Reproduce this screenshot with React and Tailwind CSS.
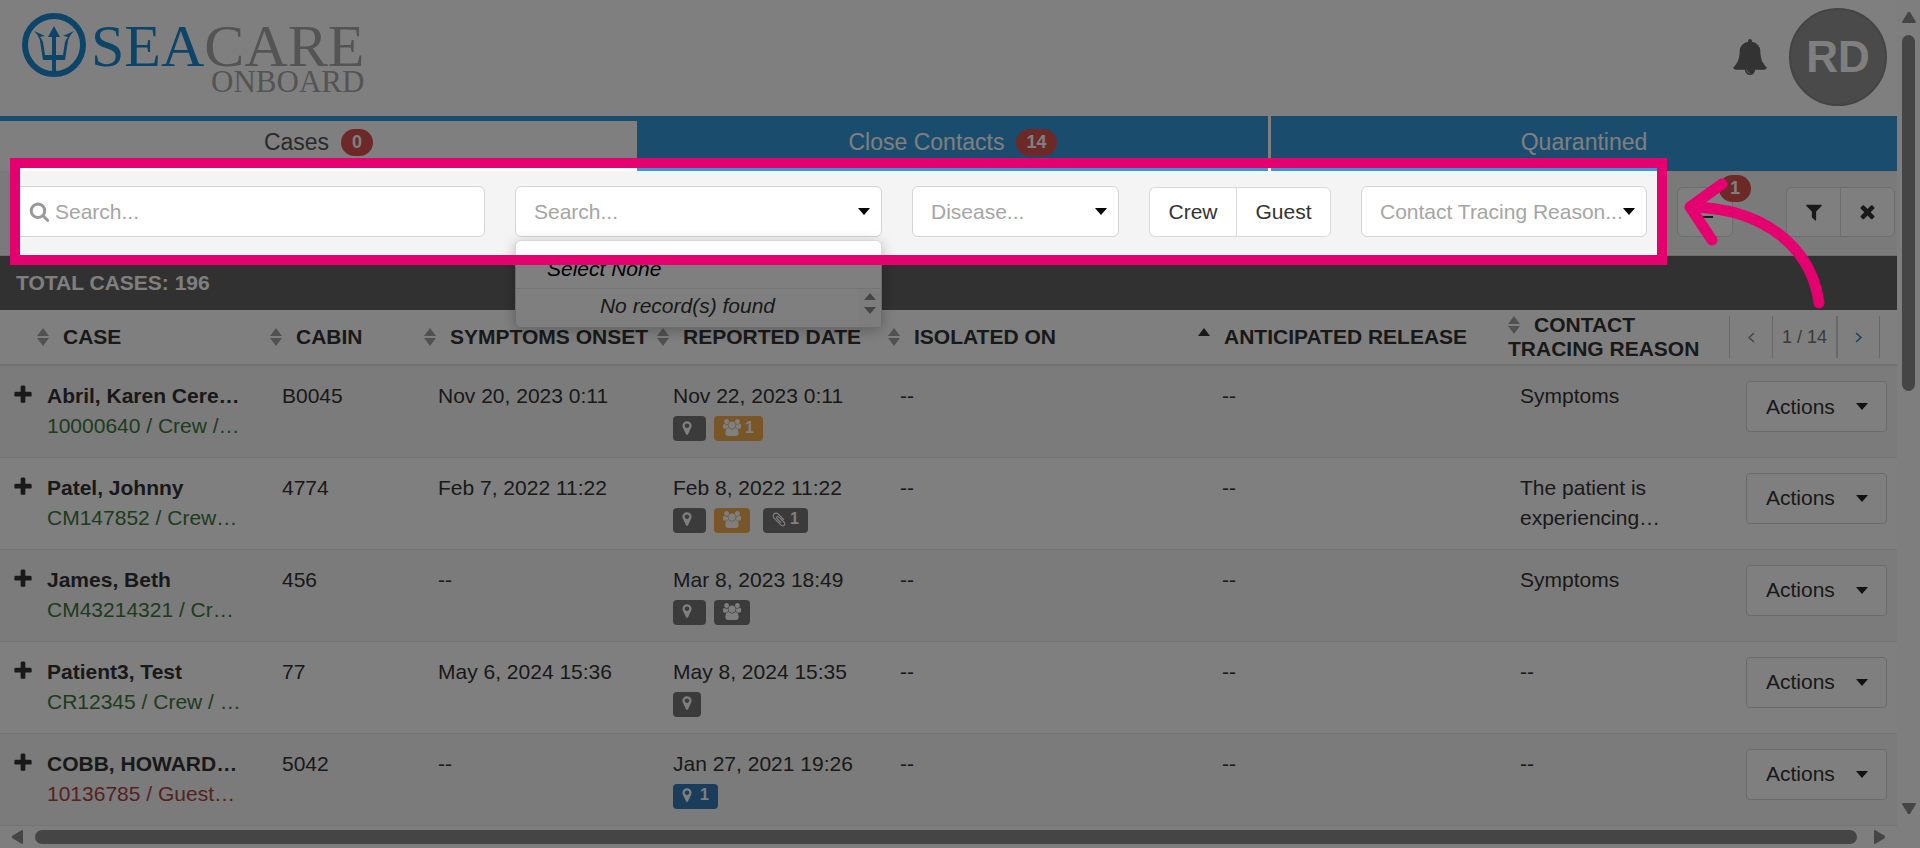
import React from 'react';

const ICONS = {
  search: 'M1216 832q0-185-131.5-316.5t-316.5-131.5-316.5 131.5-131.5 316.5 131.5 316.5 316.5 131.5 316.5-131.5 131.5-316.5zm512 832q0 52-38 90t-90 38q-54 0-90-38l-343-342q-179 124-399 124-143 0-273.5-55.5t-225-150-150-225-55.5-273.5 55.5-273.5 150-225 225-150 273.5-55.5 273.5 55.5 225 150 150 225 55.5 273.5q0 220-124 399l343 343q37 37 37 90z',
  times: 'M1490 1322q0 40-28 68l-136 136q-28 28-68 28t-68-28l-294-294-294 294q-28 28-68 28t-68-28l-136-136q-28-28-28-68t28-68l294-294-294-294q-28-28-28-68t28-68l136-136q28-28 68-28t68 28l294 294 294-294q28-28 68-28t68 28l136 136q28 28 28 68t-28 68l-294 294 294 294q28 28 28 68z',
  filter: 'M1595 295q17 41-14 70l-493 493v742q0 42-39 59-13 5-25 5-27 0-45-19l-256-256q-19-19-19-45v-486l-493-493q-31-29-14-70 17-39 59-39h1280q42 0 59 39z',
  plus: 'M1600 736v192q0 40-28 68t-68 28h-416v416q0 40-28 68t-68 28h-192q-40 0-68-28t-28-68v-416h-416q-40 0-68-28t-28-68v-192q0-40 28-68t68-28h416v-416q0-40 28-68t68-28h192q40 0 68 28t28 68v416h416q40 0 68 28t28 68z',
  bell: 'M912 1696q0-16-16-16-59 0-101.5-42.5t-42.5-101.5q0-16-16-16t-16 16q0 73 51.5 124.5t124.5 51.5q16 0 16-16zm816-288q0 52-38 90t-90 38h-448q0 106-75 181t-181 75-181-75-75-181h-448q-52 0-90-38t-38-90q50-42 91-88t85-119.5 74.5-158.5 50-206 19.5-260q0-152 117-282.5t307-158.5q-8-19-8-39 0-40 28-68t68-28 68 28 28 68q0 20-8 39 190 28 307 158.5t117 282.5q0 139 19.5 260t50 206 74.5 158.5 85 119.5 91 88z',
  marker: 'M1152 640q0-106-75-181t-181-75-181 75-75 181 75 181 181 75 181-75 75-181zm256 0q0 109-33 179l-364 774q-16 33-47.5 52t-67.5 19-67.5-19-46.5-52l-365-774q-33-70-33-179 0-212 150-362t362-150 362 150 150 362z',
  clip: 'M1596 1385q0 117-79 196t-196 79q-135 0-235-100l-777-776q-113-115-113-271 0-159 110-270t269-111q158 0 273 113l605 606q10 10 10 22 0 16-30.5 46.5t-46.5 30.5q-13 0-23-10l-606-607q-79-77-181-77-106 0-179 75t-73 181q0 105 76 181l776 777q63 63 145 63 64 0 106-42t42-106q0-82-63-145l-581-581q-26-24-60-24-29 0-48 19t-19 48q0 32 25 59l410 410q10 10 10 22 0 16-31 47t-47 31q-12 0-22-10l-410-410q-63-61-63-149 0-82 57-139t139-57q88 0 149 63l581 581q100 98 100 235z',
  users: 'M657 896q-162 5-265 128h-134q-82 0-138-40.5t-56-118.5q0-353 124-353 6 0 43.5 21t97.5 42.5 119 21.5q67 0 133-23-5 37-5 66 0 159 93 287zm1071 637q0 120-73 189.5t-194 69.5h-874q-121 0-194-69.5t-73-189.5q0-53 3.5-103.5t14-109 26.5-108.5 43-97.5 62-81 85.5-53.5 111.5-20q10 0 43 21.5t73 48 107 48 135 21.5 135-21.5 107-48 73-48 43-21.5q61 0 111.5 20t85.5 53.5 62 81 43 97.5 26.5 108.5 14 109 3.5 103.5zm-1024-1277q0 106-75 181t-181 75-181-75-75-181 75-181 181-75 181 75 75 181zm704 384q0 159-112.5 271.5t-271.5 112.5-271.5-112.5-112.5-271.5 112.5-271.5 271.5-112.5 271.5 112.5 112.5 271.5zm576 225q0 78-56 118.5t-138 40.5h-134q-103-123-265-128 93-128 93-287 0-29-5-66 66 23 133 23 59 0 119-21.5t97.5-42.5 43.5-21q124 0 124 353zm-128-609q0 106-75 181t-181 75-181-75-75-181 75-181 181-75 181 75 75 181z',
};

const VIEW_BOXES = {
  marker: '384 0 1024 1792',
  users: '64 0 1920 1792',
  clip: '128 96 1536 1600',
};

const Icon = ({ name, className }) => (
  <svg viewBox={VIEW_BOXES[name] || '0 0 1792 1792'} className={className} fill="currentColor" aria-hidden="true">
    <path d={ICONS[name]} />
  </svg>
);

const Caret = ({ className = '' }) => (
  <svg viewBox="0 0 12 7" className={`w-3 h-[7px] ${className}`} fill="currentColor" aria-hidden="true">
    <path d="M0 0h12L6 7z" />
  </svg>
);

const SortIcon = ({ direction }) => (
  <svg viewBox="0 0 12 18" className="inline-block w-3 h-[18px] mr-[14px] align-[-2px]" aria-hidden="true">
    <path d="M0 8L6 0l6 8z" fill={direction === 'asc' ? '#333' : '#a3a3a3'} />
    {!direction && <path d="M0 10h12l-6 8z" fill="#a3a3a3" />}
  </svg>
);

const Logo = () => (
  <a href="#home" className="flex items-start gap-[5px]" aria-label="SeaCare Onboard">
    <svg viewBox="0 0 64 64" className="w-16 h-16 text-[#1b8ad0]" fill="currentColor" aria-hidden="true">
      <circle cx="32" cy="32" r="29" fill="none" stroke="currentColor" strokeWidth="6" />
      <path d="M32 13l6 11h-4v18h7l2-13q1-3 3-5l-5-1 11-5q-5 5-6 10l-3 19h-9v14h-4V47h-9l-3-19q-1-5-6-10l11 5-5 1q2 2 3 5l2 13h7V24h-4z" />
    </svg>
    <span className="flex flex-col items-end pt-[7px] font-['Liberation_Serif',serif] text-[#a8a8a8]">
      <span className="text-[60px] leading-[52px]"><span className="text-[#1b8ad0]">SEA</span>CARE</span>
      <span className="text-[31px] leading-5">ONBOARD</span>
    </span>
  </a>
);

const CountBadge = ({ children, className = '' }) => (
  <span className={`h-[27px] min-w-8 px-[10px] rounded-full bg-[#d9534f] text-white text-lg leading-[27px] font-bold text-center ${className}`}>
    {children}
  </span>
);

const Header = () => (
  <header className="flex items-center justify-between h-[116px] pl-[22px] pr-[10px]">
    <div className="self-start pt-[13px]">
      <Logo />
    </div>
    <div className="flex items-center gap-[21px] pb-[2px]">
      <button type="button" aria-label="Notifications" className="text-[#666]">
        <Icon name="bell" className="w-9 h-9" />
      </button>
      <button type="button" className="w-[98px] h-[98px] rounded-full bg-[#949494] border-2 border-[#888] text-white text-[44px] font-bold">
        RD
      </button>
    </div>
  </header>
);

const Tabs = () => (
  <nav className="grid grid-cols-[637fr_634fr_626fr] h-[55px] text-[23px]">
    <a href="#cases" className="flex items-center justify-center gap-3 border-t-[5px] border-[#3498db] pb-2 text-[#555]">
      Cases <CountBadge>0</CountBadge>
    </a>
    <a href="#contacts" className="flex items-center justify-center gap-3 bg-[#3498db] border-r-[3px] border-white pb-[3px] text-white">
      Close Contacts <CountBadge>14</CountBadge>
    </a>
    <a href="#quarantined" className="flex items-center justify-center bg-[#3498db] pb-[3px] text-white">
      Quarantined
    </a>
  </nav>
);

const SearchMenu = () => (
  <div className="absolute z-10 top-[54px] left-0 w-full rounded-md border border-[#d8d8d8] bg-white shadow-[0_3px_14px_rgba(0,0,0,0.25)] italic leading-[30px]">
    <button type="button" className="block w-full pl-[31px] pt-[13px] pb-1 text-left text-black border-b border-[#e6e6e6]">
      Select None
    </button>
    <div className="flex">
      <p className="grow pt-[2px] pb-[6px] text-center">No record(s) found</p>
      <div className="flex flex-col gap-[7px] w-[22px] pt-1 pl-[5px] bg-[#fafafa] text-[#8b8b8b]">
        <Caret className="rotate-180" />
        <Caret />
      </div>
    </div>
  </div>
);

const Dropdown = ({ label, className }) => (
  <div className={`relative shrink-0 h-[51px] ${className}`}>
    <select
      aria-label={label}
      defaultValue=""
      className="appearance-none w-full h-full pl-[18px] rounded-md border border-[#d4d4d4] bg-white text-[#a5a5a5]"
    >
      <option value="">{label}</option>
    </select>
    <Caret className="absolute right-3 top-[22px] text-black" />
  </div>
);

const buttonBox = 'border border-[#dadada] bg-white';

const Toolbar = () => (
  <div className="flex items-center gap-[30px] h-[85px] pl-[14px] pr-[2px] pb-[3px] bg-[#f4f4f4] border-b border-[#ddd]">
    <label className="grow flex items-center gap-[5px] h-[51px] pl-[14px] rounded-md border border-[#d4d4d4] bg-white">
      <Icon name="search" className="shrink-0 w-[21px] h-[21px] text-[#999]" />
      <input type="search" aria-label="Search cases" placeholder="Search..." className="grow min-w-0 outline-none placeholder:text-[#a5a5a5]" />
    </label>

    <div className="relative shrink-0 w-[367px] h-[51px]">
      <input
        type="text"
        role="combobox"
        aria-expanded="true"
        aria-label="Search records"
        placeholder="Search..."
        className="w-full h-full pl-[18px] rounded-md border border-[#d4d4d4] bg-white outline-none placeholder:text-[#a5a5a5]"
      />
      <Caret className="absolute right-3 top-[22px] text-black" />
      <SearchMenu />
    </div>

    <Dropdown label="Disease..." className="w-[207px]" />

    <div className="flex shrink-0 h-[50px]">
      <button type="button" className={`${buttonBox} w-[87px] rounded-l-md border-r-0`}>Crew</button>
      <button type="button" className={`${buttonBox} w-[95px] rounded-r-md`}>Guest</button>
    </div>

    <Dropdown label="Contact Tracing Reason..." className="w-[286px]" />

    <div className="relative shrink-0">
      <button type="button" aria-label="Pending" className={`${buttonBox} flex items-center justify-center w-[56px] h-[50px] rounded-md`}>
        <span className="w-4 h-3 border-b-2 border-[#333]" />
      </button>
      <CountBadge className="absolute -top-3 left-[42px]">1</CountBadge>
    </div>

    <div className="flex shrink-0 h-[50px] ml-[23px]">
      <button type="button" aria-label="Filter" className={`${buttonBox} flex items-center justify-center w-[54px] rounded-l-md border-r-0`}>
        <Icon name="filter" className="w-5 h-5 text-[#333]" />
      </button>
      <button type="button" aria-label="Clear" className={`${buttonBox} flex items-center justify-center w-[55px] rounded-r-md`}>
        <Icon name="times" className="w-[21px] h-[21px] text-[#333]" />
      </button>
    </div>
  </div>
);

const TAG_COLORS = {
  gray: 'bg-[#767676]',
  orange: 'bg-[#f0ad4e]',
  blue: 'bg-[#337ab7]',
};

const TAG_STYLES = {
  marker: { box: 'gap-2 not-last:pr-[14px]', icon: 'w-[10px] h-4' },
  users: { box: 'gap-1 not-last:mr-[5px]', icon: 'w-[18px] h-[17px]' },
  clip: { box: 'gap-1', icon: 'w-[14px] h-[15px]' },
};

const Tag = ({ icon, color, count }) => (
  <span className={`inline-flex items-center h-[25px] px-[9px] pb-[2px] rounded text-white text-base font-bold ${TAG_STYLES[icon].box} ${TAG_COLORS[color]}`}>
    <Icon name={icon} className={TAG_STYLES[icon].icon} />
    {count}
  </span>
);

const columns = [
  { label: 'Case', width: 'w-[270px]' },
  { label: 'Cabin', width: 'w-[154px]' },
  { label: 'Symptoms Onset', width: 'w-[233px]' },
  { label: 'Reported Date', width: 'w-[231px]' },
  { label: 'Isolated On', width: '' },
  { label: 'Anticipated Release', width: '', direction: 'asc' },
  { label: 'Contact Tracing Reason', width: 'w-[221px]' },
];

const cases = [
  {
    name: 'Abril, Karen Cere…', info: '10000640 / Crew /…', cabin: 'B0045',
    onset: 'Nov 20, 2023 0:11', reported: 'Nov 22, 2023 0:11', reason: 'Symptoms',
    tags: [{ icon: 'marker', color: 'gray' }, { icon: 'users', color: 'orange', count: 1 }],
  },
  {
    name: 'Patel, Johnny', info: 'CM147852 / Crew…', cabin: '4774',
    onset: 'Feb 7, 2022 11:22', reported: 'Feb 8, 2022 11:22', reason: 'The patient is experiencing…',
    tags: [{ icon: 'marker', color: 'gray' }, { icon: 'users', color: 'orange' }, { icon: 'clip', color: 'gray', count: 1 }],
  },
  {
    name: 'James, Beth', info: 'CM43214321 / Cr…', cabin: '456',
    onset: '--', reported: 'Mar 8, 2023 18:49', reason: 'Symptoms',
    tags: [{ icon: 'marker', color: 'gray' }, { icon: 'users', color: 'gray' }],
  },
  {
    name: 'Patient3, Test', info: 'CR12345 / Crew / …', cabin: '77',
    onset: 'May 6, 2024 15:36', reported: 'May 8, 2024 15:35', reason: '--',
    tags: [{ icon: 'marker', color: 'gray' }],
  },
  {
    name: 'COBB, HOWARD…', info: '10136785 / Guest…', cabin: '5042', guest: true,
    onset: '--', reported: 'Jan 27, 2021 19:26', reason: '--',
    tags: [{ icon: 'marker', color: 'blue', count: 1 }],
  },
];

const Chevron = ({ d, className }) => (
  <svg viewBox="0 0 7 11" className={`w-[7px] h-[11px] ${className}`} fill="none" stroke="currentColor" strokeWidth="1.5" aria-hidden="true">
    <path d={d} />
  </svg>
);

const Pager = () => (
  <div className="flex h-[42px] w-[151px] border-x border-[#d0d0d0] text-lg font-normal text-[#777]">
    <button type="button" aria-label="Previous page" className="flex items-center justify-center w-[42px]">
      <Chevron d="M6 1L1 5.500l5 4.500" className="text-[#888]" />
    </button>
    <span className="grow border-l border-r-2 border-[#d0d0d0] text-center leading-[42px]">1 / 14</span>
    <button type="button" aria-label="Next page" className="flex items-center justify-center w-[41px]">
      <Chevron d="M1 1l5 4.500L1 10" className="text-[#337ab7]" />
    </button>
  </div>
);

const CasesTable = () => (
  <table className="w-full table-fixed">
    <thead className="shadow-[0_2px_3px_rgba(0,0,0,0.08)]">
      <tr className="h-[55px] border-b-2 border-[#e4e4e4]">
        {columns.map((col, i) => (
          <th key={col.label} scope="col" className={`${col.width} ${i === 0 ? 'pl-[37px]' : ''} text-left leading-6 uppercase`}>
            <SortIcon direction={col.direction} />
            {col.label}
          </th>
        ))}
        <th scope="col" aria-label="Pages" className="w-[168px]">
          <Pager />
        </th>
      </tr>
    </thead>
    <tbody>
      {cases.map((row) => (
        <tr key={row.name} className="h-[92px] border-b border-[#e8e8e8] odd:bg-[#f7f7f7] align-top leading-[30px] *:pt-[15px] *:pl-3">
          <td>
            <div className="flex items-start gap-[13px]">
              <button type="button" aria-label={`Expand ${row.name}`} className="pt-[3px]">
                <Icon name="plus" className="w-[22px] h-[22px]" />
              </button>
              <div>
                <div className="font-bold">{row.name}</div>
                <div className={row.guest ? 'text-[#a94442]' : 'text-[#3c763d]'}>{row.info}</div>
              </div>
            </div>
          </td>
          <td>{row.cabin}</td>
          <td><div className="pl-[2px]">{row.onset}</div></td>
          <td>
            <div className="pl-1">{row.reported}</div>
            <div className="flex gap-2 pl-1 pt-[5px]">
              {row.tags.map((tag) => <Tag key={tag.icon} {...tag} />)}
            </div>
          </td>
          <td>--</td>
          <td><div className="pl-3">--</div></td>
          <td>{row.reason}</td>
          <td>
            <button type="button" className="flex items-center justify-between w-[141px] h-[51px] ml-[5px] pl-[19px] pr-[18px] rounded border border-[#d6d6d6] bg-white">
              Actions <Caret className="text-[#222]" />
            </button>
          </td>
        </tr>
      ))}
    </tbody>
  </table>
);

const HorizontalScrollbar = () => (
  <div className="flex items-center gap-3 h-[22px] px-3 bg-[#fcfcfc] text-[#8b8b8b]">
    <svg viewBox="0 0 11 14" className="w-[11px] h-[14px]" fill="currentColor" aria-hidden="true"><path d="M11 1v12q0 1-1 1L0 8V6l10-6q1 0 1 1z" /></svg>
    <div className="grow h-[14px] mr-[5px] rounded-full bg-current" />
    <svg viewBox="0 0 11 14" className="w-[11px] h-[14px]" fill="currentColor" aria-hidden="true"><path d="M0 1v12q0 1 1 1l10-6V6L1 0Q0 0 0 1z" /></svg>
  </div>
);

const VerticalScrollbar = () => (
  <div className="flex flex-col items-center gap-3 w-[23px] shrink-0 pt-3 pb-[34px] bg-[#fcfcfc] text-[#8b8b8b]">
    <svg viewBox="0 0 14 11" className="w-[14px] h-[11px]" fill="currentColor" aria-hidden="true"><path d="M1 11h12q1 0 1-1L8 0H6L0 10q0 1 1 1z" /></svg>
    <div className="w-[13px] h-[356px] rounded-full bg-current" />
    <svg viewBox="0 0 14 11" className="w-[14px] h-[11px] mt-auto" fill="currentColor" aria-hidden="true"><path d="M1 0h12q1 0 1 1L8 11H6L0 1q0-1 1-1z" /></svg>
  </div>
);

/* Dims the page and leaves the filter bar lit, with an arrow pointing at it */
const Spotlight = () => (
  <>
    <div className="absolute z-20 pointer-events-none left-[10px] right-[253px] top-[158px] h-[107px] border-[10px] border-[#e5006f] shadow-[0_0_0_4000px_rgba(0,0,0,0.5)]"></div>
    <svg viewBox="0 0 144 136" className="absolute z-30 pointer-events-none right-[93px] top-[176px] w-36 h-34" fill="none" stroke="#e5006f" strokeWidth="11" strokeLinecap="round" strokeLinejoin="round" aria-hidden="true">
      <path d="M136 127C129 74 84 32 7 31M39 8L7 31l22 33" />
    </svg>
  </>
);

const App = () => {
  return (
    <div className="relative flex min-h-screen overflow-hidden bg-white text-[#333] text-[21px] font-['Liberation_Sans',Arial,sans-serif]">
      <div className="flex flex-col grow min-w-0">
        <Header />
        <Tabs />
        <Toolbar />
        <h2 className="h-[54px] pl-4 bg-[#636363] text-white font-bold leading-[54px]">TOTAL CASES: 196</h2>
        <CasesTable />
        <div className="mt-auto">
          <HorizontalScrollbar />
        </div>
      </div>
      <VerticalScrollbar />
      <Spotlight />
    </div>
  );
};

export default App;
